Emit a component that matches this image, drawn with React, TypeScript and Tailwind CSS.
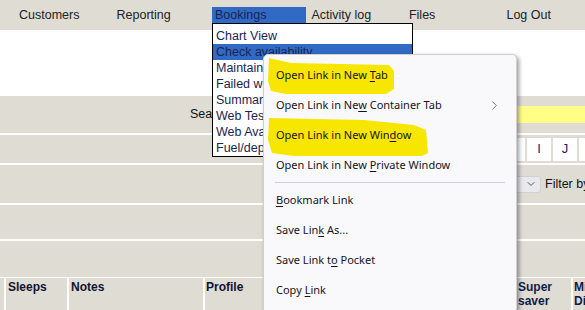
import { ChevronDown, ChevronRight } from "lucide-react";

const navItems = ["Customers", "Reporting", "Bookings", "Activity log", "Files", "Log Out"];

const bookingItems = [
  "Chart View",
  "Check availability",
  "Maintain web bookings",
  "Failed web bookings",
  "Summary report",
  "Web Test bookings",
  "Web Availability",
  "Fuel/deposit report",
];

const letters = ["A", "B", "C", "D", "E", "F", "G", "H", "I", "J", "K"];

type MenuItem = { before: string; key: string; after: string; submenu?: boolean };

const menuTop: MenuItem[] = [
  { before: "Open Link in New ", key: "T", after: "ab" },
  { before: "Open Link in Ne", key: "w", after: " Container Tab", submenu: true },
  { before: "Open Link in New Win", key: "d", after: "ow" },
  { before: "Open Link in New ", key: "P", after: "rivate Window" },
];

const menuBottom: MenuItem[] = [
  { before: "", key: "B", after: "ookmark Link" },
  { before: "Save Lin", key: "k", after: " As..." },
  { before: "Save Link t", key: "o", after: " Pocket" },
  { before: "Copy ", key: "L", after: "ink" },
];

function ContextItem({ item }: { item: MenuItem }) {
  return (
    <div className="relative flex h-[30px] items-center pl-[12px] pr-[14px] text-[11px] text-[#15141a]">
      <span>
        {item.before}
        <span className="underline underline-offset-[2px]">{item.key}</span>
        {item.after}
      </span>
      {item.submenu && (
        <ChevronRight className="ml-auto h-[15px] w-[15px] text-[#5b5b66]" strokeWidth={1.25} />
      )}
    </div>
  );
}

export default function App() {
  return (
    <div className="relative h-[310px] w-[585px] overflow-hidden bg-white font-['Liberation_Sans',Arial,sans-serif] text-[12.5px] text-[#222]">
      {/* top nav */}
      <div className="flex h-[30px] bg-[#dfdcd4]">
        {navItems.map((label) =>
          label === "Bookings" ? (
            <div key={label} className="relative w-[98px] pt-[7px]">
              <div className="absolute left-[17px] top-[7px] z-10 h-[16px] w-[94px] bg-[#316ac5] pl-[3px] leading-[16px] text-[#1b2250]">
                {label}
              </div>
            </div>
          ) : (
            <div key={label} className="w-[98px] pl-[19px] leading-[30px]">
              {label}
            </div>
          )
        )}
      </div>

      <div className="h-[66px]" />

      {/* search row */}
      <div className="mb-[2px] flex h-[37px] items-center bg-[#dfdcd4] pl-[190px]">
        <span className="text-[#111]">Search:</span>
        <div className="ml-[30px] h-[17px] flex-1 bg-[#ffff88]" />
      </div>

      {/* letters row */}
      <div className="mb-[2px] flex h-[28px] items-center gap-[2px] bg-[#dfdcd4] pl-[319px]">
        {letters.map((l) => (
          <div
            key={l}
            className="flex h-[23px] w-[24px] shrink-0 items-center justify-center bg-white text-[13px] text-[#231d63]"
          >
            {l}
          </div>
        ))}
      </div>

      {/* filter row */}
      <div className="mb-[2px] flex h-[38px] items-center bg-[#dfdcd4] pl-[440px]">
        <div className="flex h-[17px] w-[101px] shrink-0 items-center justify-end rounded-[3px] border border-[#cfcfd6] bg-[#e9e9ed] pr-[3px]">
          <ChevronDown className="h-[12px] w-[12px] text-[#444]" strokeWidth={1.75} />
        </div>
        <span className="ml-[4px] whitespace-nowrap text-[#111]">Filter by</span>
      </div>

      <div className="mb-[2px] h-[34px] bg-[#dfdcd4]" />
      <div className="mb-[1px] h-[36px] bg-[#dfdcd4]" />

      {/* table header */}
      <div className="flex gap-[2px] text-[12px] font-bold leading-[14px] text-[#101430]">
        <div className="h-[40px] w-[4px] shrink-0 bg-[#dfdcd4]" />
        <div className="h-[40px] w-[61px] shrink-0 bg-[#dfdcd4] px-[2px] pt-[2px]">Sleeps</div>
        <div className="h-[40px] w-[134px] shrink-0 bg-[#dfdcd4] px-[2px] pt-[2px]">Notes</div>
        <div className="h-[40px] w-[85px] shrink-0 bg-[#dfdcd4] px-[1px] pt-[2px]">Profile</div>
        <div className="h-[40px] w-[108px] shrink-0 bg-[#dfdcd4]" />
        <div className="h-[40px] w-[113px] shrink-0 bg-[#dfdcd4]" />
        <div className="h-[40px] w-[54px] shrink-0 bg-[#dfdcd4] px-[1px] pt-[2px] text-[#101c48]">
          Super saver
        </div>
        <div className="h-[40px] w-[60px] shrink-0 bg-[#dfdcd4] px-[1px] pt-[2px] text-[#101c48]">
          Min Discount
        </div>
      </div>

      {/* bookings dropdown */}
      <div className="absolute left-[212px] top-[23px] z-20 h-[134px] w-[201px] overflow-hidden border border-black bg-white pt-[4px] text-[#1b2550]">
        {bookingItems.map((item, i) => (
          <div
            key={item}
            className={`h-[16px] whitespace-nowrap pl-[3px] leading-[16px] ${i === 1 ? "bg-[#316ac5]" : ""}`}
          >
            {item}
          </div>
        ))}
      </div>

      {/* context menu */}
      <div className="absolute left-[263px] top-[54px] z-30 h-[270px] w-[254px] rounded-t-[5px] border border-[#cfcfd8] bg-[#f9f9fb] pt-[5px] font-['Noto_Sans',sans-serif] shadow-[2px_2px_4px_rgba(0,0,0,0.4)]">
        <svg className="absolute left-0 top-0" width="254" height="110" aria-hidden="true">
          <path
            d="M5 3 L27 8 L125 10 L130 16 L130 34 L122 39 L22 39 L7 36 L4 26 Z"
            fill="#f7e600"
          />
          <path
            d="M5 63 L100 65 L150 70 L162 75 L164 98 L158 101 L30 101 L8 98 L4 85 Z"
            fill="#f7e600"
          />
        </svg>
        {menuTop.map((item) => (
          <ContextItem key={item.before + item.key} item={item} />
        ))}
        <div className="mx-[11px] my-[2px] h-px bg-[#d0d0d7]" />
        {menuBottom.map((item) => (
          <ContextItem key={item.before + item.key} item={item} />
        ))}
      </div>
    </div>
  );
}
